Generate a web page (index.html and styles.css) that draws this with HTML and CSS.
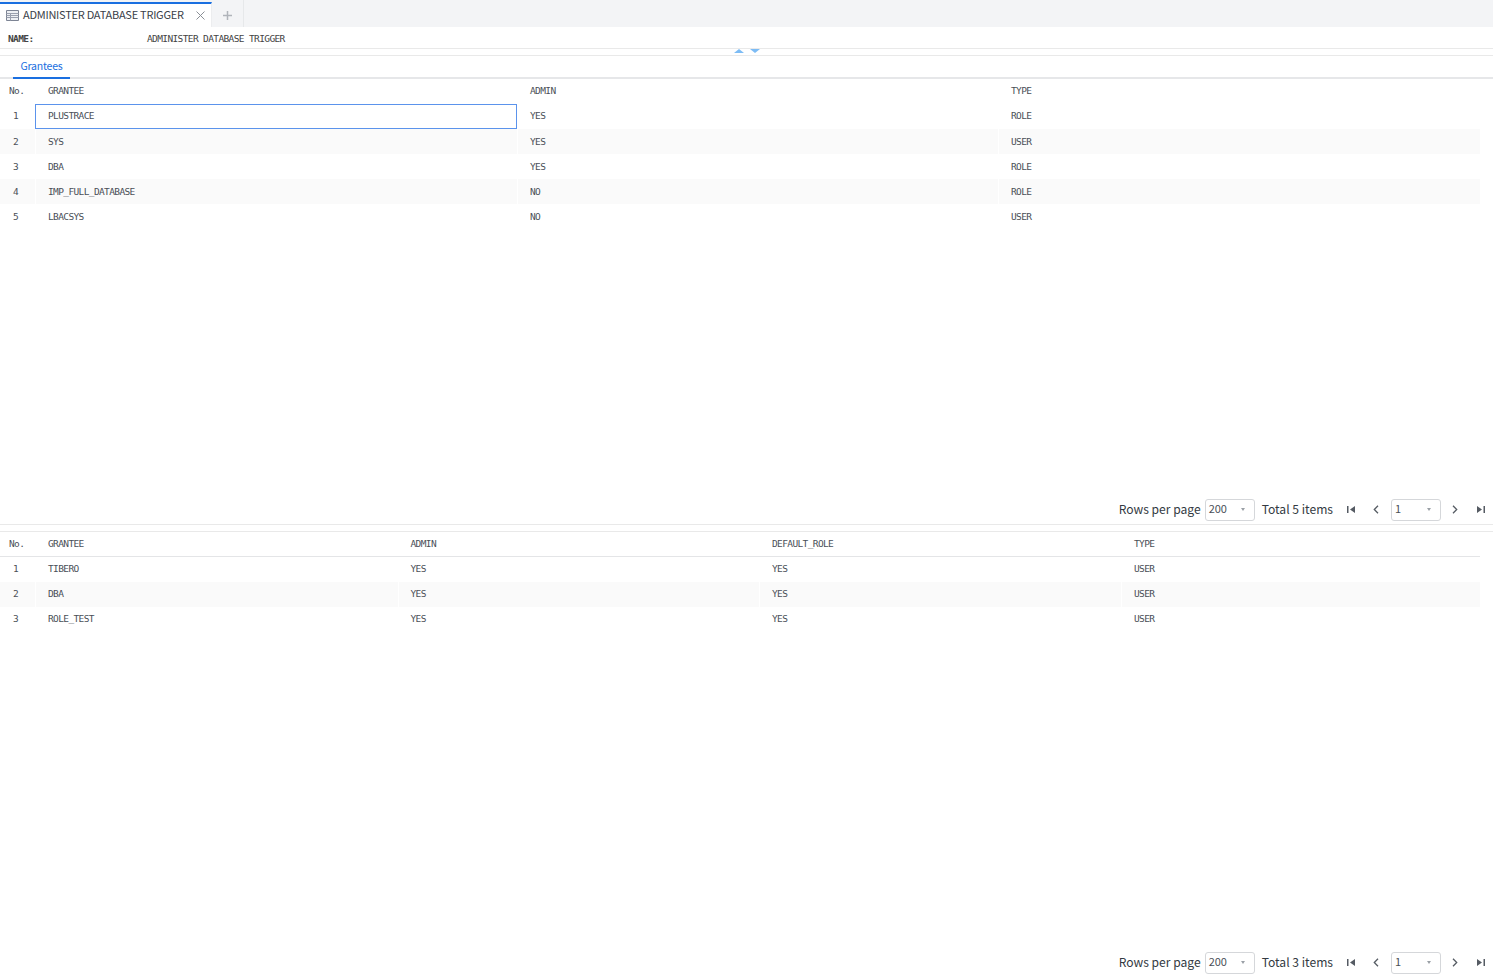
FILE: index.html
```html
<!DOCTYPE html>
<html lang="en">
<head>
<meta charset="utf-8">
<title>Administer Database Trigger</title>
<link rel="stylesheet" href="styles.css">
</head>
<body>
<div class="app">
  <div class="tabbar">
    <div class="tab">
      <svg class="tab-icon" width="13" height="11" viewBox="0 0 13 11"><path d="M.5.5h12v10H.5z" fill="#eef0f4" stroke="#7d8494"/><path d="M.5 3.500h12M.5 5.500h12M.5 7.500h12M4.500 3.500v7" fill="none" stroke="#9aa0ae"/></svg>
      <span class="tab-title">ADMINISTER DATABASE TRIGGER</span>
      <svg class="tab-close" width="9" height="9" viewBox="0 0 9 9"><path d="M.5.5l8 8M8.500.5l-8 8" fill="none" stroke="#8a8f96"/></svg>
    </div>
    <div class="tab-add"><svg width="9" height="9" viewBox="0 0 9 9"><path d="M4.500 0v9M0 4.500h9" fill="none" stroke="#b0b4ba" stroke-width="1.500"/></svg></div>
  </div>
  <div class="name-row"><span class="name-label">NAME:</span><span class="name-value">ADMINISTER DATABASE TRIGGER</span></div>
  <div class="splitter splitter-top">
    <svg class="arrows" width="26" height="5" viewBox="0 0 26 5"><path d="M5 0l5 4H0zM16 0h10l-5 4z" fill="#7dbcf5"/></svg>
  </div>
  <div class="subtabs"><div class="subtab">Grantees</div></div>

  <section class="panel panel-first">
    <div class="grid grid-three">
      <div class="row head"><div class="no">No.</div><div>GRANTEE</div><div>ADMIN</div><div>TYPE</div></div>
      <div class="row"><div class="no">1</div><div class="selected">PLUSTRACE</div><div>YES</div><div>ROLE</div></div>
      <div class="row alt"><div class="no">2</div><div>SYS</div><div>YES</div><div>USER</div></div>
      <div class="row"><div class="no">3</div><div>DBA</div><div>YES</div><div>ROLE</div></div>
      <div class="row alt"><div class="no">4</div><div>IMP_FULL_DATABASE</div><div>NO</div><div>ROLE</div></div>
      <div class="row"><div class="no">5</div><div>LBACSYS</div><div>NO</div><div>USER</div></div>
    </div>
    <div class="pager">
      <span class="pager-text">Rows per page</span>
      <div class="select select-size"><span>200</span><i class="caret"></i></div>
      <span class="pager-text total">Total 5 items</span>
      <svg class="pg pg-first" width="8" height="7" viewBox="0 0 8 7"><path d="M0 0h1.500v7H0zM8 0v7L3 3.500z" fill="#555b63"/></svg>
      <svg class="pg pg-prev" width="6" height="9" viewBox="0 0 6 9"><path d="M5 .8L1.300 4.500 5 8.200" fill="none" stroke="#555b63" stroke-width="1.300"/></svg>
      <div class="select select-page"><span>1</span><i class="caret"></i></div>
      <svg class="pg pg-next" width="6" height="9" viewBox="0 0 6 9"><path d="M1 .8l3.700 3.700L1 8.200" fill="none" stroke="#555b63" stroke-width="1.300"/></svg>
      <svg class="pg pg-last" width="8" height="7" viewBox="0 0 8 7"><path d="M0 0v7l5-3.500zM6.500 0H8v7H6.500z" fill="#555b63"/></svg>
    </div>
  </section>

  <div class="splitter splitter-mid"></div>

  <section class="panel panel-second">
    <div class="grid grid-four">
      <div class="row head"><div class="no">No.</div><div>GRANTEE</div><div>ADMIN</div><div>DEFAULT_ROLE</div><div>TYPE</div></div>
      <div class="row"><div class="no">1</div><div>TIBERO</div><div>YES</div><div>YES</div><div>USER</div></div>
      <div class="row alt"><div class="no">2</div><div>DBA</div><div>YES</div><div>YES</div><div>USER</div></div>
      <div class="row"><div class="no">3</div><div>ROLE_TEST</div><div>YES</div><div>YES</div><div>USER</div></div>
    </div>
    <div class="pager">
      <span class="pager-text">Rows per page</span>
      <div class="select select-size"><span>200</span><i class="caret"></i></div>
      <span class="pager-text total">Total 3 items</span>
      <svg class="pg pg-first" width="8" height="7" viewBox="0 0 8 7"><path d="M0 0h1.500v7H0zM8 0v7L3 3.500z" fill="#555b63"/></svg>
      <svg class="pg pg-prev" width="6" height="9" viewBox="0 0 6 9"><path d="M5 .8L1.300 4.500 5 8.200" fill="none" stroke="#555b63" stroke-width="1.300"/></svg>
      <div class="select select-page"><span>1</span><i class="caret"></i></div>
      <svg class="pg pg-next" width="6" height="9" viewBox="0 0 6 9"><path d="M1 .8l3.700 3.700L1 8.200" fill="none" stroke="#555b63" stroke-width="1.300"/></svg>
      <svg class="pg pg-last" width="8" height="7" viewBox="0 0 8 7"><path d="M0 0v7l5-3.500zM6.500 0H8v7H6.500z" fill="#555b63"/></svg>
    </div>
  </section>
</div>
</body>
</html>
```
FILE: styles.css
```css
* { box-sizing: border-box; }
html, body { margin: 0; height: 100%; background: #fff; overflow: hidden; }
body { font-family: "Noto Sans CJK KR", "Noto Sans", sans-serif; color: #3d434b; }
.app { height: 977px; display: flex; flex-direction: column; }

.tabbar { height: 27px; background: #f3f4f6; display: flex; padding-top: 2px; }
.tab { width: 212px; height: 25px; background: #fff; border-top: 2px solid #1a6fe0; border-right: 1px solid #ecedef; display: flex; align-items: center; padding-left: 6px; }
.tab-icon { flex: none; }
.tab-title { margin-left: 4px; font-size: 11px; letter-spacing: -0.25px; line-height: 20px; white-space: nowrap; width: 173px; flex: none; color: #3a4048; padding-bottom: 6px; height: 24px; }
.tab-close { flex: none; }
.tab-add { width: 32px; margin-top: -2px; padding-top: 4px; border-right: 1px solid #e6e8ea; display: flex; align-items: center; justify-content: center; }

.name-row { height: 21px; display: flex; align-items: center; padding: 1px 0 0 8px; font-family: "DejaVu Sans Mono", monospace; font-size: 9.500px; letter-spacing: -0.62px; color: #444; }
.name-label { width: 139px; font-weight: 700; }
.splitter { flex: none; border-top: 1px solid #e9e9e9; border-bottom: 1px solid #e9e9e9; display: flex; justify-content: center; }
.splitter-top { height: 8px; }
.arrows { margin-left: 1px; }
.subtabs { height: 23px; border-bottom: 2px solid #e6e7e9; padding-left: 13px; display: flex; }
.subtab { width: 57px; height: 23px; border-bottom: 2px solid #1a6fe0; text-align: center; font-size: 10.500px; letter-spacing: -0.2px; line-height: 20px; color: #1a6fe0; }

.panel { display: flex; flex-direction: column; }
.panel-first { height: 445px; }
.panel-second { flex: 1; }
.splitter-mid { height: 8px; }
.grid { flex: 1; width: 1480px; font-family: "DejaVu Sans Mono", monospace; font-size: 9.500px; letter-spacing: -0.62px; color: #4a4f57; }
.row { display: grid; height: 25px; align-items: center; }
.grid-three .row { grid-template-columns: 35px 482px 481px 482px; }
.grid-four .row { grid-template-columns: 35px 362.500px 361.500px 362px 359px; }
.row > div { height: 100%; padding-left: 13px; display: flex; align-items: center; white-space: nowrap; }
.grid-three .row:nth-child(-n+2) > div, .grid-four .row > div { padding-bottom: 2px; }
.row.head > .no { padding-left: 9px; }
.grid-four .head { border-bottom: 1px solid #e4e5e7; }
.row.alt > div { background: #fafafa; box-shadow: inset 1px 0 #fff; }
.row.alt > .no { box-shadow: none; }
.row > .selected { border: 1px solid #5b93ec; padding-left: 12px; }

.pager { height: 27px; flex: none; display: flex; align-items: center; padding-bottom: 2px; justify-content: flex-end; }
.pager-text { font-size: 12.100px; line-height: 20px; white-space: nowrap; color: #333a42; padding-bottom: 1px; }
.select { height: 22px; border: 1px solid #d5d7da; border-radius: 3px; display: flex; align-items: center; justify-content: space-between; font-size: 11px; padding: 0 9px 3px 3px; color: #4a4f57; }
.select-size { width: 50px; margin-left: 4px; }
.select-page { width: 50px; padding-left: 3px; }
.total { margin-left: 7px; }
.caret { width: 0; height: 0; border-left: 2.500px solid transparent; border-right: 2.500px solid transparent; border-top: 3px solid #9aa0a6; margin-top: 3px; }
.pg { flex: none; }
.pg-first { margin-left: 14px; }
.pg-prev { margin-left: 18px; margin-right: 12px; }
.pg-next { margin-left: 11px; }
.pg-last { margin-left: 19px; margin-right: 8px; }
```
